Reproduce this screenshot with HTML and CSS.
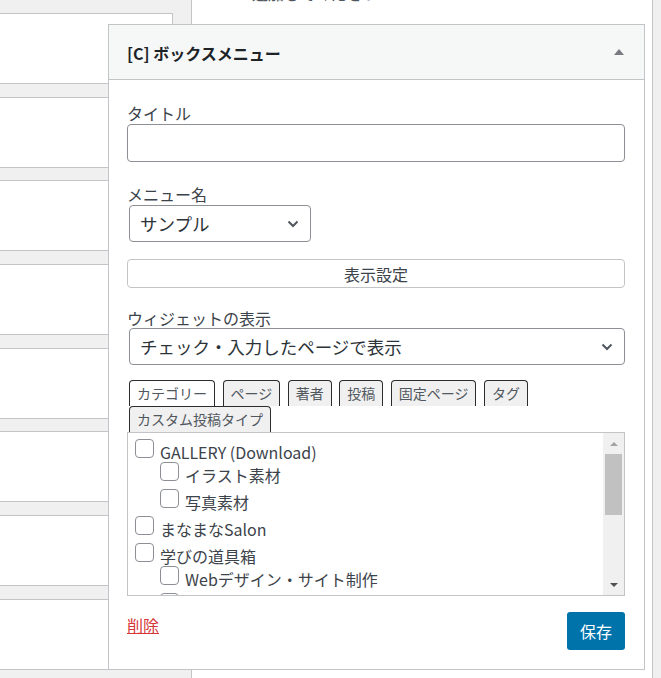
FILE: index.html
```html
<!DOCTYPE html>
<html lang="ja">
<head>
    <meta charset="UTF-8">
    <meta name="viewport" content="width=device-width, initial-scale=1.0">
    <title>ウィジェット</title>
    <link rel="stylesheet" href="styles.css">
</head>
<body>
    <div class="screen">
        <div class="sidebar-list">
            <div class="slot"></div>
            <div class="slot"></div>
            <div class="slot"></div>
            <div class="slot"></div>
            <div class="slot"></div>
            <div class="slot"></div>
            <div class="slot"></div>
            <div class="slot"></div>
            <div class="slot"></div>
        </div>

        <div class="area">
            <p class="area-note">追加してください</p>

            <div class="widget">
                <div class="widget-top">
                    <h3 class="widget-title">[C] ボックスメニュー</h3>
                    <span class="toggle"></span>
                </div>

                <div class="widget-inside">
                    <label class="field-label">タイトル</label>
                    <input class="text-input" type="text">

                    <label class="field-label label-menu">メニュー名</label>
                    <div class="select select-short">
                        <span>サンプル</span>
                        <svg width="12" height="8" viewBox="0 0 12 8"><path d="M1.5 1.5 L6 6 L10.5 1.5" fill="none" stroke="#50575e" stroke-width="2"/></svg>
                    </div>

                    <button class="settings-button">表示設定</button>

                    <label class="field-label label-display">ウィジェットの表示</label>
                    <div class="select select-wide">
                        <span>チェック・入力したページで表示</span>
                        <svg width="12" height="8" viewBox="0 0 12 8"><path d="M1.5 1.5 L6 6 L10.5 1.5" fill="none" stroke="#50575e" stroke-width="2"/></svg>
                    </div>

                    <div class="tabs">
                        <span class="tab active">カテゴリー</span>
                        <span class="tab">ページ</span>
                        <span class="tab">著者</span>
                        <span class="tab">投稿</span>
                        <span class="tab">固定ページ</span>
                        <span class="tab">タグ</span>
                        <span class="tab">カスタム投稿タイプ</span>
                    </div>

                    <div class="checklist">
                        <ul class="checklist-items">
                            <li>
                                <div class="item-row"><span class="check"></span><span class="item-name">GALLERY (Download)</span></div>
                                <ul class="children">
                                    <li><div class="item-row"><span class="check"></span><span class="item-name">イラスト素材</span></div></li>
                                    <li><div class="item-row"><span class="check"></span><span class="item-name">写真素材</span></div></li>
                                </ul>
                            </li>
                            <li><div class="item-row"><span class="check"></span><span class="item-name">まなまなSalon</span></div></li>
                            <li>
                                <div class="item-row"><span class="check"></span><span class="item-name">学びの道具箱</span></div>
                                <ul class="children">
                                    <li><div class="item-row"><span class="check"></span><span class="item-name">Webデザイン・サイト制作</span></div></li>
                                    <li><div class="item-row"><span class="check"></span><span class="item-name">ブログ運営</span></div></li>
                                </ul>
                            </li>
                        </ul>
                        <div class="scrollbar">
                            <div class="scroll-btn"><span class="arrow-up"></span></div>
                            <div class="scroll-thumb"></div>
                            <div class="scroll-track"></div>
                            <div class="scroll-btn"><span class="arrow-down"></span></div>
                        </div>
                    </div>

                    <div class="widget-footer">
                        <a class="delete-link" href="#">削除</a>
                        <button class="save-button">保存</button>
                    </div>
                </div>
            </div>
        </div>
    </div>
</body>
</html>
```

FILE: styles.css
```css
* {
    box-sizing: border-box;
}
body {
    margin: 0;
    height: 678px;
    overflow: hidden;
    background: #f0f0f1;
    font-family: "Noto Sans CJK JP", sans-serif;
    color: #3c434a;
}
.screen {
    display: flex;
    align-items: flex-start;
}

/* left column of collapsed widgets */
.sidebar-list {
    flex-shrink: 0;
    width: 183px;
    margin-left: -10px;
}
.slot {
    height: 71px;
    margin-top: 12.7px;
    background: #fff;
    border: 1px solid #c3c4c7;
}
.slot:first-child {
    margin-top: -70.7px;
}

/* widget area column */
.area {
    flex-shrink: 0;
    width: 462px;
    min-height: 678px;
    margin-left: 18px;
    background: #fff;
    border-left: 1px solid #c3c4c7;
    border-right: 1px solid #c3c4c7;
}
.area-note {
    margin: -17px 0 0;
    padding-left: 60px;
    font-size: 16px;
    line-height: 20px;
    color: #50575e;
}

.widget {
    position: relative;
    z-index: 1;
    width: 537px;
    margin: 21px 0 0 -84px;
    background: #fff;
    border: 1px solid #c3c4c7;
}
.widget-top {
    display: flex;
    align-items: center;
    justify-content: space-between;
    height: 55px;
    padding: 2px 20px 0 18px;
    background: #f6f7f7;
    border-bottom: 1px solid #c3c4c7;
}
.widget-title {
    margin: 0;
    font-size: 16px;
    font-weight: 700;
    line-height: 20px;
    color: #1d2327;
}
.toggle {
    width: 0;
    height: 0;
    margin-top: -2px;
    border-left: 5px solid transparent;
    border-right: 5px solid transparent;
    border-bottom: 6px solid #787c82;
}

.widget-inside {
    padding: 23px 19px 19px 18px;
}
.field-label {
    display: block;
    font-size: 16px;
    line-height: 20px;
}
.label-menu {
    margin-top: 22px;
}
.label-display {
    margin-top: 20px;
}
.text-input {
    display: block;
    width: 100%;
    height: 38px;
    margin: 1px 0 0;
    border: 1px solid #8c8f94;
    border-radius: 4px;
    background: #fff;
}

.select {
    display: flex;
    align-items: center;
    justify-content: space-between;
    height: 37px;
    margin-left: 2px;
    padding: 0 11px 0 10px;
    border: 1px solid #8c8f94;
    border-radius: 4px;
    font-size: 17.5px;
    color: #2c3338;
    background: #fff;
}
.select-short {
    width: 182px;
    margin-top: 1px;
}

.settings-button {
    display: block;
    width: 100%;
    height: 29px;
    margin-top: 17px;
    padding: 0;
    border: 1px solid #c3c4c7;
    border-radius: 4px;
    background: #fff;
    font-family: inherit;
    font-size: 16px;
    color: #3c434a;
}

.tabs {
    display: flex;
    flex-wrap: wrap;
    column-gap: 7.5px;
    margin-top: 15px;
    padding-left: 2px;
}
.tab {
    height: 26px;
    padding: 0 7px;
    border: 1px solid #2c2c2c;
    border-bottom: 0;
    border-radius: 4px 4px 0 0;
    background: #f0f0f0;
    font-size: 14px;
    line-height: 25px;
    color: #50575e;
}
.tab.active {
    background: #fff;
}

.checklist {
    display: flex;
    height: 164px;
    border: 1px solid #c3c4c7;
}
.checklist-items {
    flex: 1;
    overflow: hidden;
    margin: 0;
    padding: 6px 0 0 7px;
    list-style: none;
}
.checklist-items li {
    margin-bottom: 4px;
}
.children {
    margin: 0;
    padding-left: 25px;
    list-style: none;
}
.item-row {
    display: flex;
    align-items: flex-start;
    height: 23px;
}
.check {
    flex-shrink: 0;
    width: 19px;
    height: 19px;
    margin-right: 6px;
    border: 1px solid #8c8f94;
    border-radius: 4px;
    background: #fff;
}
.item-name {
    padding-top: 4px;
    font-size: 16px;
    line-height: 19px;
    white-space: nowrap;
}

.scrollbar {
    display: flex;
    flex-direction: column;
    width: 21px;
    background: #f0f0f0;
}
.scroll-btn {
    display: flex;
    align-items: center;
    justify-content: center;
    height: 21px;
}
.arrow-up {
    width: 0;
    height: 0;
    border-left: 4.5px solid transparent;
    border-right: 4.5px solid transparent;
    border-bottom: 4px solid #a3a3a3;
}
.arrow-down {
    width: 0;
    height: 0;
    border-left: 4.5px solid transparent;
    border-right: 4.5px solid transparent;
    border-top: 4px solid #505050;
}
.scroll-thumb {
    height: 61px;
    margin: 0 2px;
    background: #c1c1c1;
}
.scroll-track {
    flex: 1;
}

.widget-footer {
    display: flex;
    align-items: flex-start;
    justify-content: space-between;
    margin-top: 16px;
}
.delete-link {
    margin-top: 3px;
    font-size: 16px;
    line-height: 20px;
    color: #d63638;
    text-decoration: underline;
}
.save-button {
    height: 38px;
    padding: 0 13px;
    border: 0;
    border-radius: 3px;
    background: #0073aa;
    font-family: inherit;
    font-size: 16px;
    color: #fff;
}
```
